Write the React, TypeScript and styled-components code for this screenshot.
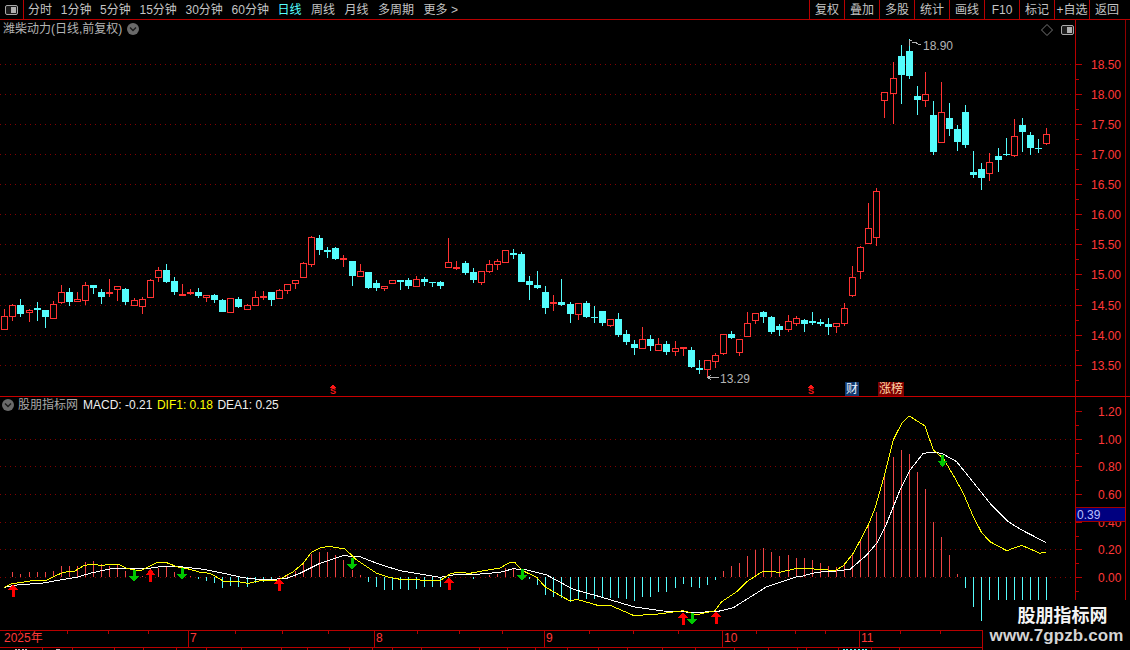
import React from 'react';
import styled, { createGlobalStyle } from 'styled-components';

const SANS = `"Liberation Sans", "Noto Sans CJK SC", sans-serif`;
const RED_LINE = '#b80000';

const Global = createGlobalStyle`
  html, body { margin: 0; padding: 0; background: #000; }
  #root { width: 1130px; height: 650px; }
`;

const Screen = styled.div`
  position: relative;
  width: 1130px;
  height: 650px;
  overflow: hidden;
  background: #000;
  font: 12px/14px ${SANS};
  color: #c4c4c4;
`;

const Toolbar = styled.div`
  display: flex;
  align-items: stretch;
  height: 19px;
  border-bottom: 1px solid ${RED_LINE};
`;

const PanelToggle = styled.div`
  display: flex;
  align-items: center;
  justify-content: center;
  width: 23px;
  border-right: 1px solid ${RED_LINE};
  box-sizing: content-box;
`;

const Periods = styled.div`
  display: flex;
  align-items: center;
  gap: 8.7px;
  padding-left: 4px;
  flex: 1;
`;

const Period = styled.span<{ $active?: boolean; $loose?: boolean }>`
  white-space: nowrap;
  margin-left: ${(p) => (p.$loose ? '0.8px' : '0')};
  color: ${(p) => (p.$active ? '#55ffff' : '#c4c4c4')};
`;

const Actions = styled.div`
  display: flex;
  padding-right: 6px;
`;

const Action = styled.div`
  display: flex;
  align-items: center;
  justify-content: center;
  width: 34px;
  border-left: 1px solid ${RED_LINE};
  white-space: nowrap;
`;

const Panel = styled.section<{ $h: number }>`
  position: relative;
  height: ${(p) => p.$h}px;
  box-sizing: border-box;
  border-bottom: 1px solid #c80000;
`;

const ChartSvg = styled.svg`
  display: block;
`;

const PriceHeader = styled.div`
  position: absolute;
  left: 3px;
  top: 2px;
  display: flex;
  align-items: center;
  gap: 5px;
  color: #b4b4b4;
  white-space: nowrap;
`;

const HeaderTools = styled.div`
  position: absolute;
  right: 56px;
  top: 4px;
  display: flex;
  align-items: center;
  gap: 8px;
`;

const IndicatorHeader = styled.div`
  position: absolute;
  left: 2px;
  top: 1px;
  display: flex;
  align-items: center;
  white-space: nowrap;
`;

const IndicatorName = styled.span`
  color: #a8a8a8;
  margin-left: 4px;
  margin-right: 5px;
`;

const Reading = styled.span<{ $color: string }>`
  color: ${(p) => p.$color};
  margin-right: 4.5px;
`;

const PriceTag = styled.div`
  position: absolute;
  left: 1076px;
  top: 110px;
  width: 49px;
  height: 15px;
  box-sizing: border-box;
  border-top: 1px solid #a00000;
  border-bottom: 1px solid #a00000;
  background: #000080;
  color: #b8c0ff;
  line-height: 14px;
  padding-left: 1px;
`;

const AxisText = styled.text`
  fill: #ff3838;
  font: 12px ${SANS};
`;

const NoteText = styled.text`
  fill: #b4b4b4;
  font: 12px ${SANS};
`;

const FlagMark = styled.text`
  fill: #ff1818;
  font: bold 9px ${SANS};
`;

const BadgeRow = styled.div`
  position: absolute;
  left: 845px;
  top: 362px;
  display: flex;
  gap: 19px;
`;

const Badge = styled.span<{ $bg: string; $color: string }>`
  display: inline-block;
  height: 14px;
  padding: 0 1px;
  background: ${(p) => p.$bg};
  color: ${(p) => p.$color};
  line-height: 14px;
`;

const TimeAxis = styled.div`
  position: relative;
  display: flex;
  height: 16px;
  box-sizing: content-box;
  border-bottom: 1px solid ${RED_LINE};
  border-top: 1px solid ${RED_LINE};
  margin-top: -1px;
`;

const TimeCell = styled.div<{ $w: number }>`
  width: ${(p) => p.$w}px;
  box-sizing: border-box;
  border-right: 1px solid ${RED_LINE};
  padding-left: 1px;
  line-height: 15px;
  color: #ff3838;
  font-size: 12px;
  &:first-child {
    padding-left: 4px;
  }
`;

const TickLayer = styled.svg`
  position: absolute;
  left: 0;
  top: 0;
`;

const TabStrip = styled.div`
  display: flex;
  height: 3px;
  overflow: hidden;
`;

const Tab = styled.div<{ $w: number }>`
  display: flex;
  justify-content: center;
  width: ${(p) => p.$w}px;
  flex: none;
  box-sizing: border-box;
  border-right: 1px solid ${RED_LINE};
`;

const TabInk = styled.span<{ $w: number; $color: string }>`
  width: ${(p) => p.$w}px;
  height: 0;
  margin-top: 1px;
  border-top: 2px dotted ${(p) => p.$color};
`;

const Watermark = styled.div`
  position: absolute;
  left: 983px;
  top: 600px;
  width: 147px;
  height: 50px;
  background: #000;
  display: flex;
  flex-direction: column;
  align-items: center;
`;

const WatermarkTitle = styled.div`
  margin-top: 2px;
  margin-left: 12px;
  font: bold 18px/24px "Noto Sans CJK SC", sans-serif;
  color: #f4f4f4;
`;

const WatermarkUrl = styled.div`
  font: bold 17px/20px ${SANS};
  color: #d4d4d4;
  letter-spacing: 0.1px;
`;

type Row = [number, number, number, number, number];
const groups: { oy: number; rows: Row[] }[] = [
  { oy: 230, rows: [
    [1,237,259,299,299],[1,222,226,262,273],[0,207,225,252,261],[1,238,240,248,276],[0,216,234,240,273],[0,240,240,261,294],
    [1,213,222,266,266],[1,165,187,218,222],[0,174,186,216,228],[1,186,207,215,215],[1,156,165,212,225],[0,165,165,174,192],
    [0,177,186,201,222],[1,147,186,192,201],[1,168,168,179,213],[0,174,177,216,225],[1,204,210,227,227],[1,201,207,230,252],
    [1,147,150,203,203],[1,111,120,143,156],[0,102,120,156,159],[0,141,153,186,195],[1,162,192,194,194],[1,177,186,191,195],
    [0,174,186,198,204],[1,195,195,203,216],[0,192,195,210,219],[0,207,210,246,246],[1,204,205,248,248],[0,201,207,231,234],
    [1,222,226,239,239],[1,183,202,227,227],[1,183,199,205,210],[0,186,186,210,228],[1,177,180,206,206],[1,162,163,182,192],
    [1,150,151,163,177],[1,96,99,143,143],[1,18,21,104,111],[0,15,24,60,75],[0,51,60,66,84],[0,51,54,87,90],
    [1,75,84,90,111],[0,93,93,138,168],[1,102,124,140,140],[0,126,126,174,177],[0,150,159,174,183],[1,168,169,176,183],
    [1,150,151,161,161],[0,150,150,156,180],[0,144,150,168,177],[1,138,148,170,170],[0,141,147,156,168],[0,156,157,160,171],
    [0,153,156,168,177],[1,24,97,113,113],[1,93,111,117,120],[0,93,99,129,135],[0,114,126,150,159],[1,123,124,158,165],
    [1,90,102,125,129],[1,87,94,104,120],[1,60,61,98,98],[0,57,69,75,87],[0,66,72,156,156],[0,138,153,165,210],
    [0,123,165,174,177],[0,168,186,234,252],[1,195,216,222,243],[0,147,216,225,228],[0,216,222,252,279],[1,219,220,254,270],
    [0,213,219,261,264],[0,228,261,264,279],[0,243,243,279,288],[1,267,268,288,291],[0,249,267,315,321],[0,300,312,336,345],
    [0,330,342,354,375],[1,291,328,356,356],[0,315,327,348,363],[1,324,343,362,362],[0,333,342,366,375],[1,333,355,365,378],
    [1,351,351,356,378],[0,351,360,411,414],[0,390,414,419,432],[1,391,391,419,445],[1,370,376,395,414],
  ] },
  { oy: 180, rows: [
    [1,462,463,521,525],[0,453,462,473,477],[1,478,478,518,528],[1,396,430,470,470],[1,399,400,423,432],[0,393,396,411,429],
    [0,408,411,456,462],[0,432,438,450,468],[1,405,424,450,456],[1,408,415,431,438],[0,417,420,432,456],[0,396,423,429,435],
    [0,417,426,432,438],[0,414,432,441,465],[1,430,430,440,459],[1,369,385,432,438],[1,258,292,348,351],[1,198,202,276,297],
    [1,69,145,192,192],[1,24,34,173,198],
  ] },
  { oy: 30, rows: [
    [1,186,187,212,264],[1,96,145,193,282],[0,45,78,135,222],[0,27,63,138,147],[0,168,198,210,255],[1,126,193,212,231],
    [0,213,255,366,375],[1,156,247,338,338],[0,219,264,297,318],[0,285,297,336,363],[0,225,246,345,354],[0,363,426,435,444],
    [0,399,417,444,480],[1,369,397,431,453],[0,354,378,390,426],[0,324,372,375,378],[1,267,319,377,381],[0,264,285,306,366],
    [0,306,315,354,375],[0,327,354,357,369],[1,294,313,341,345],
  ] },
];

const CANDLE_RED = '#ff3232';
const CANDLE_CYAN = '#54fcfc';
const barX = (i: number) => Math.round(4.3 + 8.075 * i);

const candles = groups.flatMap((g) =>
  g.rows.map(([red, hi, top, bot, lo]) => ({
    red: red === 1,
    hi: Math.round(g.oy + hi / 3),
    top: Math.round(g.oy + top / 3),
    bot: Math.round(g.oy + bot / 3),
    lo: Math.round(g.oy + lo / 3),
  })),
);

const histogram = [
  0, 4.7, 3.3, 5.3, 5.3, 4.7, 6.3, 11.3, 11.3, 11.3, 15.3, 16.3, 13.3, 11.3, 13.3, 6.3, 3, 1.3, 4, 9, 10.6, 5.3, 4, 1,
  -1.7, -3.7, -5.7, -10.7, -8.7, -9.7, -9.7, -5.7, -4.7, -2.7, 1, 3.3, 6.3, 13.3, 23.3, 25.3, 25.3, 22.3, 17.3, 7.3, 2.3,
  -4.7, -9.7, -12.7, -12.7, -11.7, -12.7, -11.7, -9.7, -9.7, -9.7, -0.5, 0.5, -0.3, -1.5, 0.3, 2, 3, 9, 9, 3, -2, -7.7,
  -17.7, -19.7, -20.7, -24.7, -21.7, -21.7, -21.7, -19.7, -20.7, -20.7, -21.7, -23.7, -19.7, -19.7, -14.7, -14.7, -10.7,
  -6.7, -9.7, -10.7, -7.7, -2.7, 6.3, 11.3, 14.3, 21.3, 27.3, 29.3, 25.3, 21.3, 22.3, 19.3, 19.3, 17.3, 14.3, 11.3, 10.3,
  13.3, 22.3, 36.3, 51.3, 65.3, 100.3, 120.3, 127.3, 123.3, 105.3, 88.3, 54.7, 40.3, 22.3, 3.3, -10.7, -29.7, -43.7, -40,
  -40, -40, -40, -40, -40, -40, -40,
];

type Pt = [number, number];
const seg = (ox: number, oy: number, pts: Pt[]): string[] =>
  pts.map(([x, y]) => `${(ox + x / 3).toFixed(1)},${(oy + y / 3).toFixed(1)}`);

const difLine = [
  ...seg(0, 540, [[12,142],[35,131],[60,128],[96,122],[138,122],[160,110],[190,97],[225,93],[250,78],[270,72],[300,76],[355,73],[380,85],[420,93],[450,78],[470,68],[500,68],[530,80],[570,88],[600,97],[630,100],[670,123],[700,123],[745,130],[790,120],[835,120],[880,95],[910,70],[935,36],[960,24],[985,19],[1035,27],[1070,60],[1130,100],[1160,110]]),
  ...seg(400, 540, [[0,118],[60,120],[120,122],[150,102],[170,97],[210,100],[250,92],[300,84],[330,67],[345,68],[370,93],[410,112],[435,140],[460,155],[510,183],[530,178],[600,198],[630,196],[700,226],[760,224],[850,212],[890,224],[945,212],[965,185],[1010,155],[1040,125],[1090,93],[1140,97],[1190,85]]),
  ...seg(800, 400, [[0,505],[60,508],[105,512],[130,497],[160,460],[205,375],[225,325],[255,220],[280,120],[305,70],[328,48],[375,78],[400,150],[430,175],[465,235],[490,280],[520,350],[545,398],[570,425],[620,452],[665,436],[720,460],[737,456]]),
].join(' ');

const deaLine = [
  ...seg(0, 540, [[12,142],[50,135],[130,129],[180,120],[230,112],[270,100],[300,93],[340,85],[410,86],[440,86],[490,79],[550,81],[610,88],[680,102],[730,113],[790,120],[860,115],[900,100],[960,70],[1030,47],[1080,50],[1130,70]]),
  ...seg(400, 540, [[0,92],[60,102],[120,112],[160,105],[230,103],[300,97],[340,86],[380,90],[440,105],[520,148],[600,170],[700,200],[790,213],[880,217],[950,215],[1000,203],[1100,140],[1190,110]]),
  ...seg(800, 400, [[0,530],[50,517],[110,513],[150,508],[200,465],[230,430],[260,370],[300,270],[330,210],[370,160],[400,157],[425,160],[470,185],[510,235],[570,310],[625,365],[665,390],[737,427]]),
].join(' ');

const upArrows: Pt[] = [[12.5,584],[150,569],[278.5,578],[448.5,577],[682.5,612],[715.5,611]];
const downArrows: Pt[] = [[133.5,570],[181.5,568],[351.5,558],[521.5,569],[691.5,613],[942,455]];

const priceLevels: [number, string][] = [
  [64,'18.50'],[94,'18.00'],[124,'17.50'],[154,'17.00'],[184,'16.50'],[214,'16.00'],
  [244,'15.50'],[274,'15.00'],[305,'14.50'],[335,'14.00'],[365,'13.50'],
];
const macdLevels: [number, string][] = [
  [411,'1.20'],[439,'1.00'],[466,'0.80'],[494,'0.60'],[522,'0.40'],[549,'0.20'],[577,'0.00'],
];

const periods = ['分时','1分钟','5分钟','15分钟','30分钟','60分钟','日线','周线','月线','多周期','更多 >'];
const actions = ['复权','叠加','多股','统计','画线','F10','标记','+自选','返回'];
const timeCells: [number, string][] = [[189,'2025年'],[186,'7'],[170,'8'],[178,'9'],[137,'10'],[123,'11']];
const timeTicks = [20,67,108,148,235,282,328,417,459,502,589,633,678,756,795,825,900,940];
const tabEdges = [43,73,115,144,177,207,242,282,308,350,373,393,422,480,508,536,568,599,628,663,696,735,769,798,807,839,872,900,983];
const tabInk: Record<number, { w: number; color: string }> = {
  43: { w: 12, color: '#c4c4c4' },
  73: { w: 4, color: '#c4c4c4' },
  872: { w: 24, color: '#55ffff' },
};

const SplitIcon = () => (
  <svg width="13" height="10" viewBox="0 0 13 10">
    <rect x="0.5" y="0.5" width="12" height="9" rx="1.5" fill="#1c1c1c" stroke="#a8a8a8" />
    <rect x="6" y="2" width="5" height="6" fill="#b0b0b0" />
  </svg>
);

const Chevron = () => (
  <svg width="12" height="12" viewBox="0 0 12 12">
    <circle cx="6" cy="6" r="6" fill="#6a6a6a" />
    <path d="M3 4.5 L6 7.5 L9 4.5" fill="none" stroke="#1a1a1a" strokeWidth="1.4" />
  </svg>
);

const Diamond = () => (
  <svg width="12" height="12" viewBox="0 0 12 12">
    <path d="M6 0.5 L11.5 6 L6 11.5 L0.5 6 Z" fill="none" stroke="#777" />
  </svg>
);

const Dots = ({ y }: { y: number }) => (
  <line x1="0" x2="1075" y1={y + 0.5} y2={y + 0.5} stroke="#840000" strokeDasharray="1 4" />
);

const Ticks = ({ levels, step }: { levels: number[]; step: number }) => (
  <>
    {levels.map((y) => (
      <React.Fragment key={y}>
        <line x1="1075" x2="1082" y1={y + 0.5} y2={y + 0.5} stroke={RED_LINE} />
        <line x1="1075" x2="1079" y1={y + step + 0.5} y2={y + step + 0.5} stroke={RED_LINE} />
      </React.Fragment>
    ))}
  </>
);

const Candle = ({ i }: { i: number }) => {
  const c = candles[i];
  const x = barX(i);
  const color = c.red ? CANDLE_RED : CANDLE_CYAN;
  return (
    <g>
      <line x1={x + 0.5} x2={x + 0.5} y1={c.hi} y2={c.lo} stroke={color} />
      {c.red ? (
        <rect x={x - 2.5} y={c.top + 0.5} width={6} height={Math.max(1, c.bot - c.top - 1)} fill="#000" stroke={color} />
      ) : (
        <rect x={x - 3} y={c.top} width={7} height={Math.max(1, c.bot - c.top)} fill={color} />
      )}
    </g>
  );
};

const PriceChart = () => (
  <ChartSvg width="1130" height="376" viewBox="0 20 1130 376" shapeRendering="crispEdges">
    {priceLevels.map(([y]) => <Dots key={y} y={y} />)}
    <line x1="1075.5" x2="1075.5" y1="20" y2="396" stroke={RED_LINE} />
    <line x1="1125.5" x2="1125.5" y1="20" y2="396" stroke="#900000" />
    <Ticks levels={priceLevels.map(([y]) => y)} step={15} />
    {priceLevels.map(([y, label]) => (
      <AxisText key={label} x="1091" y={y + 5}>{label}</AxisText>
    ))}
    {candles.map((_, i) => <Candle key={i} i={i} />)}
    <polyline points="909.5,46 909.5,40 912,40" fill="none" stroke="#b4b4b4" />
    <polyline points="912,43 915,42 918,44 921,44" fill="none" stroke="#b4b4b4" />
    <NoteText x="923" y="50">18.90</NoteText>
    <path d="M708 377.5 H719 M711 375 L708 377.5 L711 380" fill="none" stroke="#b4b4b4" />
    <NoteText x="720" y="383">13.29</NoteText>
    {[333, 811].map((x) => (
      <g key={x}>
        <path d={`M${x - 3} 388 L${x} 384 L${x + 3} 388 Z`} fill="#ff1818" />
        <FlagMark x={x} y="394" textAnchor="middle">S</FlagMark>
      </g>
    ))}
  </ChartSvg>
);

const MacdChart = () => (
  <ChartSvg width="1130" height="233" viewBox="0 397 1130 233" shapeRendering="crispEdges">
    {macdLevels.slice(1).map(([y]) => <Dots key={y} y={y} />)}
    <line x1="1075.5" x2="1075.5" y1="397" y2="630" stroke={RED_LINE} />
    <line x1="1125.5" x2="1125.5" y1="397" y2="600" stroke={RED_LINE} />
    <Ticks levels={macdLevels.map(([y]) => y)} step={14} />
    {macdLevels.map(([y, label]) => (
      <AxisText key={label} x="1098" y={y + 5}>{label}</AxisText>
    ))}
    {histogram.map((v, i) =>
      v === 0 ? null : (
        <line
          key={i}
          x1={barX(i) + 0.5}
          x2={barX(i) + 0.5}
          y1="577"
          y2={577 - v}
          stroke={v > 0 ? '#ee4444' : '#54fcfc'}
        />
      ),
    )}
    <polyline points={deaLine} fill="none" stroke="#ffffff" />
    <polyline points={difLine} fill="none" stroke="#ffff00" />
    {upArrows.map(([x, y]) => (
      <path key={x} d={`M${x + 0.5} ${y} L${x + 5.5} ${y + 6} H${x + 2} V${y + 13} H${x - 1} V${y + 6} H${x - 4.5} Z`} fill="#ff0000" />
    ))}
    {downArrows.map(([x, y]) => (
      <path key={x} d={`M${x + 0.5} ${y + 12} L${x + 5.5} ${y + 6} H${x + 2} V${y} H${x - 1} V${y + 6} H${x - 4.5} Z`} fill="#00c800" />
    ))}
  </ChartSvg>
);

export default function App() {
  return (
    <Screen>
      <Global />
      <Toolbar>
        <PanelToggle><SplitIcon /></PanelToggle>
        <Periods>
          {periods.map((p, i) => <Period key={p} $active={p === '日线'} $loose={i > 6}>{p}</Period>)}
        </Periods>
        <Actions>
          {actions.map((a) => <Action key={a}>{a}</Action>)}
        </Actions>
      </Toolbar>

      <Panel $h={377}>
        <PriceChart />
        <PriceHeader>
          潍柴动力(日线,前复权)
          <Chevron />
        </PriceHeader>
        <HeaderTools>
          <Diamond />
          <SplitIcon />
        </HeaderTools>
        <BadgeRow>
          <Badge $bg="#123a6e" $color="#e8f0ff">财</Badge>
          <Badge $bg="#7c0000" $color="#ffd8a8">涨榜</Badge>
        </BadgeRow>
      </Panel>

      <Panel $h={234}>
        <MacdChart />
        <IndicatorHeader>
          <Chevron />
          <IndicatorName>股朋指标网</IndicatorName>
          <Reading $color="#f0f0f0">MACD: -0.21</Reading>
          <Reading $color="#ffff00">DIF1: 0.18</Reading>
          <Reading $color="#f0f0f0">DEA1: 0.25</Reading>
        </IndicatorHeader>
        <PriceTag>0.39</PriceTag>
      </Panel>

      <TimeAxis>
        {timeCells.map(([w, label]) => <TimeCell key={label} $w={w}>{label}</TimeCell>)}
        <TickLayer width="1130" height="4" shapeRendering="crispEdges">
          {timeTicks.map((x) => (
            <line key={x} x1={x + 0.5} x2={x + 0.5} y1="0" y2="3" stroke={RED_LINE} />
          ))}
        </TickLayer>
      </TimeAxis>

      <TabStrip>
        {tabEdges.map((edge, i) => {
          const w = edge - (i === 0 ? 0 : tabEdges[i - 1]);
          const ink = tabInk[edge];
          return (
            <Tab key={edge} $w={w}>
              {ink && <TabInk $w={ink.w} $color={ink.color} />}
            </Tab>
          );
        })}
      </TabStrip>

      <Watermark>
        <WatermarkTitle>股朋指标网</WatermarkTitle>
        <WatermarkUrl>www.7gpzb.com</WatermarkUrl>
      </Watermark>
    </Screen>
  );
}
